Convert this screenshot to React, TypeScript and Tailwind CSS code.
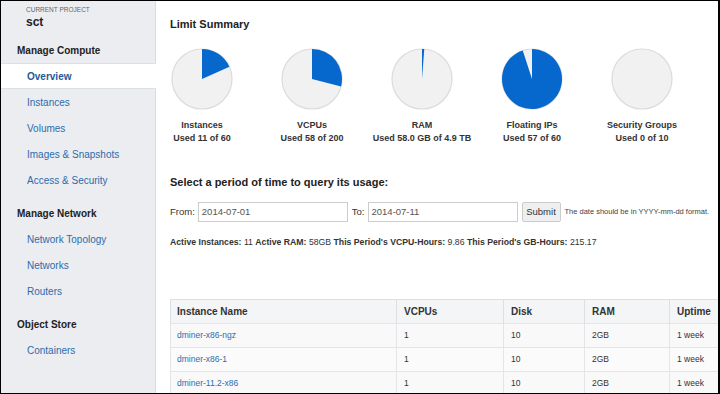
import React from "react";

const font = { fontFamily: '"Liberation Sans", Arial, sans-serif' };

type Limit = { name: string; used: string; frac: number };

const limits: Limit[] = [
  { name: "Instances", used: "Used 11 of 60", frac: 11 / 60 },
  { name: "VCPUs", used: "Used 58 of 200", frac: 58 / 200 },
  { name: "RAM", used: "Used 58.0 GB of 4.9 TB", frac: 0.012 },
  { name: "Floating IPs", used: "Used 57 of 60", frac: 57 / 60 },
  { name: "Security Groups", used: "Used 0 of 10", frac: 0 },
];

const rows = [
  { name: "dminer-x86-ngz", vcpus: "1", disk: "10", ram: "2GB", uptime: "1 week" },
  { name: "dminer-x86-1", vcpus: "1", disk: "10", ram: "2GB", uptime: "1 week" },
  { name: "dminer-11.2-x86", vcpus: "1", disk: "10", ram: "2GB", uptime: "1 week" },
];

function Pie({ frac }: { frac: number }) {
  const r = 30;
  const c = 31;
  const a = frac * 2 * Math.PI;
  const x = c + r * Math.sin(a);
  const y = c - r * Math.cos(a);
  const large = frac > 0.5 ? 1 : 0;
  return (
    <svg width="62" height="62" viewBox="0 0 62 62">
      <circle cx={c} cy={c} r={r} fill="#f1f1f1" stroke="#dcdcdc" strokeWidth="1.2" />
      {frac > 0 && (
        <path
          d={`M${c} ${c} L${c} ${c - r} A${r} ${r} 0 ${large} 1 ${x} ${y} Z`}
          fill="#0667cd"
        />
      )}
    </svg>
  );
}

function NavHeader({ label, className = "" }: { label: string; className?: string }) {
  return (
    <div className={`h-[26px] flex items-center pl-[16px] text-[10px] font-bold text-[#222] ${className}`}>
      {label}
    </div>
  );
}

function NavItem({ label, active }: { label: string; active?: boolean }) {
  if (active) {
    return (
      <div className="h-[26px] flex items-center pl-[26px] bg-white border-y border-[#dde0e4] -mr-px text-[10px] font-bold text-[#1d5a9c]">
        {label}
      </div>
    );
  }
  return (
    <div className="h-[26px] flex items-center pl-[26px] text-[10px] text-[#2d6cad]">
      {label}
    </div>
  );
}

function Sidebar() {
  return (
    <div className="w-[155px] shrink-0 bg-[#ebedf0] border-r border-[#d8dbdf]">
      <div className="h-[36px] pl-[25px] pt-[4px]">
        <div className="text-[6.5px] leading-[9px] uppercase text-[#666]">Current Project</div>
        <div className="text-[12px] leading-[16px] font-bold text-[#222]">sct</div>
      </div>
      <NavHeader label="Manage Compute" />
      <NavItem label="Overview" active />
      <NavItem label="Instances" />
      <NavItem label="Volumes" />
      <NavItem label="Images & Snapshots" />
      <NavItem label="Access & Security" />
      <NavHeader label="Manage Network" className="mt-[7px]" />
      <NavItem label="Network Topology" />
      <NavItem label="Networks" />
      <NavItem label="Routers" />
      <NavHeader label="Object Store" className="mt-[7px]" />
      <NavItem label="Containers" />
    </div>
  );
}

function Main() {
  return (
    <div className="flex-1 min-w-0 bg-white pl-[14px] text-[#333]">
      <h2 className="mt-[15px] text-[11px] leading-[17px] font-bold text-[#222]">Limit Summary</h2>
      <div className="flex -ml-[23px] mt-[15px]">
        {limits.map((l) => (
          <div key={l.name} className="w-[110px] shrink-0 flex flex-col items-center">
            <Pie frac={l.frac} />
            <div className="mt-[9px] text-[9px] leading-[13px] font-bold text-[#333] whitespace-nowrap">
              {l.name}
            </div>
            <div className="text-[9px] leading-[13px] font-bold text-[#333] whitespace-nowrap">
              {l.used}
            </div>
          </div>
        ))}
      </div>
      <h3 className="mt-[29px] text-[11px] leading-[17px] font-bold text-[#222]">
        Select a period of time to query its usage:
      </h3>
      <div className="mt-[11px] flex items-center h-[20px] text-[9.5px] text-[#333] whitespace-nowrap">
        <span>From:</span>
        <div className="ml-[3px] w-[150px] h-[20px] border border-[#ccc] flex items-center px-[3px] text-[#555]">
          2014-07-01
        </div>
        <span className="ml-[4px]">To:</span>
        <div className="ml-[3px] w-[150px] h-[20px] border border-[#ccc] flex items-center px-[3px] text-[#555]">
          2014-07-11
        </div>
        <div className="ml-[4px] w-[39px] h-[20px] border border-[#ccc] rounded-[2px] bg-[#eeeff1] flex items-center justify-center text-[9.5px] text-[#333]">
          Submit
        </div>
        <span className="ml-[4px] text-[7.5px] text-[#444]">The date should be in YYYY-mm-dd format.</span>
      </div>
      <div className="mt-[14px] text-[8.7px] leading-[13px] text-[#333] whitespace-nowrap">
        <b>Active Instances:</b> 11 <b>Active RAM:</b> 58GB <b>This Period's VCPU-Hours:</b> 9.86{" "}
        <b>This Period's GB-Hours:</b> 215.17
      </div>
      <table className="mt-[50px] border-collapse text-left w-[620px]">
        <thead>
          <tr className="h-[24px] bg-[#f4f5f6] border-t border-[#dde0e3]">
            <th className="w-[226px] pl-[6px] text-[10px] font-bold text-[#333] border-l border-[#dde0e3]">Instance Name</th>
            <th className="w-[107px] pl-[7px] text-[10px] font-bold text-[#333] border-l border-[#dde0e3]">VCPUs</th>
            <th className="w-[81px] pl-[7px] text-[10px] font-bold text-[#333] border-l border-[#dde0e3]">Disk</th>
            <th className="w-[85px] pl-[7px] text-[10px] font-bold text-[#333] border-l border-[#dde0e3]">RAM</th>
            <th className="pl-[7px] text-[10px] font-bold text-[#333] border-l border-[#dde0e3]">Uptime</th>
          </tr>
        </thead>
        <tbody>
          {rows.map((r, i) => (
            <tr
              key={r.name}
              className={`h-[24px] border-t border-[#e3e5e8] text-[8.5px] text-[#333] ${i % 2 === 0 ? "bg-[#f9f9fa]" : "bg-[#fbfbfb]"}`}
            >
              <td className="pl-[6px] text-[#2d6cad] border-l border-[#e3e5e8]">{r.name}</td>
              <td className="pl-[7px] border-l border-[#e3e5e8]">{r.vcpus}</td>
              <td className="pl-[7px] border-l border-[#e3e5e8]">{r.disk}</td>
              <td className="pl-[7px] border-l border-[#e3e5e8]">{r.ram}</td>
              <td className="pl-[7px] border-l border-[#e3e5e8]">{r.uptime}</td>
            </tr>
          ))}
        </tbody>
      </table>
    </div>
  );
}

export default function App() {
  return (
    <div
      className="w-[720px] h-[394px] overflow-hidden flex border-t border-l border-b border-r-2 border-black bg-white"
      style={font}
    >
      <Sidebar />
      <Main />
    </div>
  );
}
